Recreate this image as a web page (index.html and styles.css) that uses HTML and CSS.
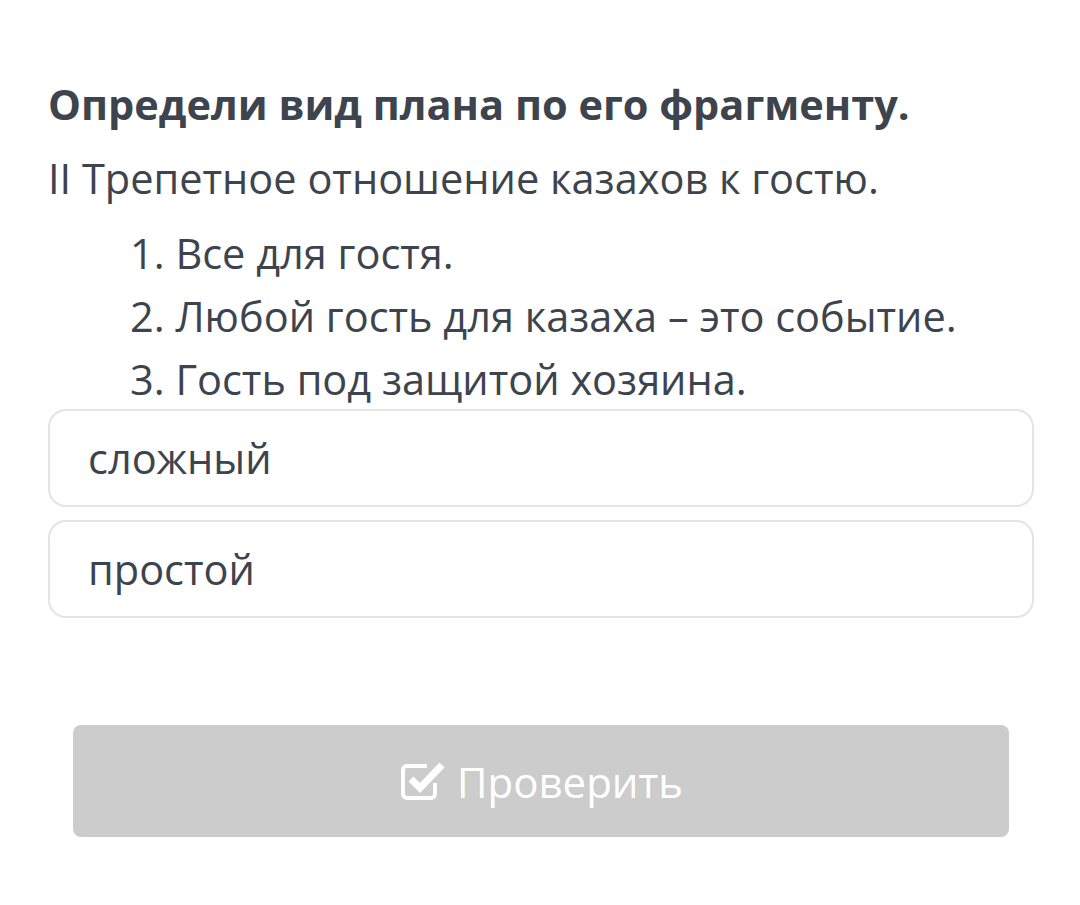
FILE: index.html
```html
<!DOCTYPE html>
<html lang="ru">
<head>
    <meta charset="UTF-8">
    <title>Определи вид плана</title>
    <link rel="stylesheet" href="styles.css">
</head>
<body>
    <div class="task">
        <h1 class="question">Определи вид плана по его фрагменту.</h1>
        <p class="lead">II Трепетное отношение казахов к гостю.</p>
        <ol class="plan">
            <li>Все для гостя.</li>
            <li>Любой гость для казаха – это событие.</li>
            <li>Гость под защитой хозяина.</li>
        </ol>

        <div class="options">
            <div class="option">сложный</div>
            <div class="option">простой</div>
        </div>

        <button class="check">
            <svg class="check__icon" viewBox="0 0 48 44">
                <path d="M36 24v11a4 4 0 0 1-4 4H8a4 4 0 0 1-4-4V11a4 4 0 0 1 4-4h20" fill="none" stroke="#fff" stroke-width="4"/>
                <path d="M12 20l9 9L43 6" fill="none" stroke="#fff" stroke-width="7"/>
            </svg>
            Проверить
        </button>
    </div>
</body>
</html>
```

FILE: styles.css
```css
* {
    box-sizing: border-box;
    margin: 0;
    padding: 0;
}

body {
    background: #fff;
    font-family: 'Open Sans', sans-serif;
    color: #3d444d;
}

.task {
    padding: 76px 46px 0 48px;
}

.question {
    font-size: 41.5px;
    font-weight: 700;
    line-height: 56px;
}

.lead {
    margin-top: 18px;
    font-size: 41.5px;
    line-height: 56px;
}

.plan {
    margin-top: 16px;
    padding-left: 82px;
    list-style: none;
    counter-reset: item;
}

.plan li {
    font-size: 41.5px;
    line-height: 63px;
    counter-increment: item;
}

.plan li::before {
    content: counter(item) ". ";
}

.options {
    display: flex;
    flex-direction: column;
    gap: 13px;
    margin-top: -2px;
}

.option {
    height: 98px;
    border: 2px solid #e4e4e4;
    border-radius: 18px;
    padding: 0 38px;
    display: flex;
    align-items: center;
    font-size: 41.5px;
}

.check {
    display: flex;
    align-items: center;
    justify-content: center;
    gap: 10px;
    width: 936px;
    height: 112px;
    margin: 107px 0 0 25px;
    border: none;
    border-radius: 8px;
    background: #cccccc;
    color: #fff;
    font-family: 'Open Sans', sans-serif;
    font-size: 42px;
}

.check__icon {
    display: block;
    flex: none;
    width: 48px;
    height: 44px;
}
```
